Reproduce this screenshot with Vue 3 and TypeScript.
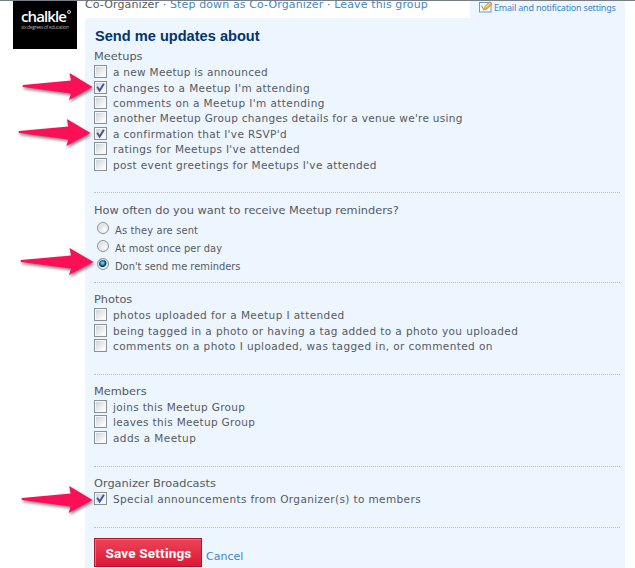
<script setup lang="ts">
interface Item { label: string; checked?: boolean; tracking?: number }
interface Group { title: string; kind: 'checkbox' | 'radio'; items: Item[] }

const groups: Group[] = [
  {
    title: 'Meetups',
    kind: 'checkbox',
    items: [
      { label: 'a new Meetup is announced', tracking: 0.29 },
      { label: "changes to a Meetup I'm attending", checked: true, tracking: 0.39 },
      { label: "comments on a Meetup I'm attending", tracking: 0.41 },
      { label: "another Meetup Group changes details for a venue we're using", tracking: 0.3 },
      { label: "a confirmation that I've RSVP'd", checked: true },
      { label: "ratings for Meetups I've attended" },
      { label: "post event greetings for Meetups I've attended" },
    ],
  },
  {
    title: 'How often do you want to receive Meetup reminders?',
    kind: 'radio',
    items: [
      { label: 'As they are sent', tracking: 0.15 },
      { label: 'At most once per day', tracking: 0.05 },
      { label: "Don't send me reminders", checked: true, tracking: 0 },
    ],
  },
  {
    title: 'Photos',
    kind: 'checkbox',
    items: [
      { label: 'photos uploaded for a Meetup I attended', tracking: 0.41 },
      { label: 'being tagged in a photo or having a tag added to a photo you uploaded', tracking: 0.4 },
      { label: 'comments on a photo I uploaded, was tagged in, or commented on', tracking: 0.41 },
    ],
  },
  {
    title: 'Members',
    kind: 'checkbox',
    items: [
      { label: 'joins this Meetup Group', tracking: 0.32 },
      { label: 'leaves this Meetup Group', tracking: 0.32 },
      { label: 'adds a Meetup', tracking: 0.42 },
    ],
  },
  {
    title: 'Organizer Broadcasts',
    kind: 'checkbox',
    items: [{ label: 'Special announcements from Organizer(s) to members', checked: true, tracking: 0.38 }],
  },
]

const arrows = [
  { x: 23, y: 73, width: 69.5 },
  { x: 19, y: 119, width: 71.5 },
  { x: 21, y: 248, width: 72.5 },
  { x: 22, y: 486, width: 70.5 },
]
</script>

<template>
  <div class="page">
    <aside class="side">
      <div class="logo">
        <div class="brand">chalkle<i class="ring"></i></div>
        <div class="tagline">six degrees of education</div>
      </div>
    </aside>
    <main class="main">
      <header class="top">
        <div class="role">Co-Organizer <b>·</b> <a>Step down as Co-Organizer</a> <b>·</b> <a>Leave this group</a></div>
        <div class="tab">
          <svg class="edit" width="14" height="12" viewBox="0 0 14 12">
            <rect x="0.5" y="1.5" width="11.5" height="9.5" fill="#f8fcff" stroke="#6f9cc5" />
            <path d="M2.5 4.5l2 4 2-1" fill="none" stroke="#7c91a6" />
            <path d="M4.6 9.2L5.6 5.6 10.4 1l2.6 2.2L8 8.2z" fill="#f0ae45" stroke="#c88836" stroke-width=".6" />
            <path d="M6.6 6.3l4.6-4.2" stroke="#ffe5a0" />
          </svg>
          <a>Email and notification settings</a>
        </div>
      </header>
      <form class="panel">
        <h2>Send me updates about</h2>
        <section v-for="g in groups" :key="g.title" class="group" :class="g.kind">
          <h3>{{ g.title }}</h3>
          <div v-for="i in g.items" :key="i.label" class="row">
            <span v-if="g.kind === 'checkbox'" class="box">
              <svg v-if="i.checked" width="13" height="13" viewBox="0 0 13 13">
                <path d="M3.2 5.8L5.6 9.6 9.9 2.8" fill="none" stroke="#3f559a" stroke-width="1.9" />
              </svg>
            </span>
            <span v-else class="dot" :class="{ on: i.checked }"></span>
            <span class="label" :style="{ letterSpacing: `${i.tracking ?? 0.35}px` }">{{ i.label }}</span>
          </div>
        </section>
        <div class="actions">
          <button type="button">Save Settings</button>
          <a>Cancel</a>
        </div>
      </form>
    </main>
    <svg class="arrows" width="100" height="568" viewBox="0 0 100 568">
      <g v-for="a in arrows" :key="a.y" :transform="`translate(${a.x} ${a.y}) scale(${a.width / 69.5} 1)`">
        <path d="M0 12L48 7.5 46.5 0 69.5 14 46 27 48 20.5 0 14Q-1 13 0 12Z" fill="#fb1058" />
      </g>
    </svg>
  </div>
</template>

<style>
body { margin: 0; background: #fff; overflow: hidden; }
</style>

<style scoped>
.page { position: relative; box-sizing: border-box; display: flex; width: 635px; height: 568px; overflow: hidden; border-top: 1px solid #797d86; font-family: "DejaVu Sans", Verdana, sans-serif; color: #555a60; }
.side { width: 85px; flex: none; }
.logo { box-sizing: border-box; width: 64px; height: 48px; margin-left: 13px; padding: 7px 0 0 8px; background: #000; color: #fff; font-family: "Open Sans", sans-serif; white-space: nowrap; }
.brand { display: flex; height: 17px; line-height: 17px; font-size: 15px; font-weight: 600; letter-spacing: -0.9px; }
.ring { box-sizing: border-box; width: 4px; height: 4px; margin: 2px 0 0 1px; border: 1px solid #ddd; border-radius: 50%; }
.tagline { height: 6px; line-height: 5px; font-size: 5px; letter-spacing: -0.38px; color: #aaa; }
.main { width: 540px; flex: none; }
.top { display: flex; justify-content: space-between; height: 17px; white-space: nowrap; }
.role { height: 17px; line-height: 8px; font-size: 11px; letter-spacing: 0.12px; }
a { color: #3f87c0; }
.role b { font-weight: 400; }
.tab { box-sizing: border-box; display: flex; width: 155px; padding-left: 9px; background: #edf5ff; font-family: "Noto Sans", sans-serif; font-size: 9px; line-height: 13px; letter-spacing: -0.2px; }
.tab a { margin-left: 1px; }
.edit { flex: none; }
.panel { box-sizing: border-box; height: 550px; padding: 8px 5px 0 9px; background: #edf5ff; border-top-left-radius: 4px; white-space: nowrap; }
h2 { margin: 0; height: 22px; padding-left: 1px; font: bold 14.6px/20px "Liberation Sans", sans-serif; color: #02356b; }
.group { box-sizing: border-box; border-top: 1px dotted #b5bfd3; padding: 8px 0 20.8px; }
.group:first-of-type { border-top: 0; padding: 0 0 20.2px; }
.group:last-of-type { padding-bottom: 20.6px; }
.group.radio { padding: 9px 0 7px; }
h3 { margin: 0; height: 16px; font-size: 11.35px; font-weight: 400; line-height: 16px; }
.row { display: flex; align-items: center; height: 15.4px; font-size: 10.5px; }
.box { box-sizing: border-box; width: 13px; height: 13px; flex: none; border: 1px solid #8b9097; background: linear-gradient(135deg, #c9ced4, #fbfbfc 80%); box-shadow: inset 0 0 0 1px #f5f7f9; }
.box svg { display: block; margin: -1px; }
.label { margin-left: 6px; padding-top: 1px; }
.radio h3 { margin-bottom: 3px; }
.radio .row { height: 18px; font-size: 9.9px; }
.dot { box-sizing: border-box; width: 12px; height: 12px; flex: none; margin: -4px 0 0 3px; border: 1px solid #8b9097; border-radius: 50%; background: radial-gradient(circle at 65% 65%, #fbfbfb, #c9cdd1); box-shadow: inset 0 0 0 1px #f4f5f6; }
.dot.on { background: radial-gradient(circle at 45% 40%, #62c4ec 0 1px, #176a9a 2.5px, #0b2f4c 3.6px, #e4e8eb 4.4px); }
.actions { display: flex; border-top: 1px dotted #b5bfd3; padding-top: 10px; }
button { box-sizing: border-box; width: 108px; height: 29px; padding: 1px 0 0 1px; border: 1px solid #b0142f; background: linear-gradient(#ec4358, #dc1936); box-shadow: inset 1px 1px 0 #f06a7b; color: #fff; font: bold 13.5px Roboto, sans-serif; letter-spacing: 0.2px; }
.actions a { margin: 11px 0 0 4px; font-size: 11px; line-height: 16px; }
.arrows { position: absolute; left: 0; top: -1px; filter: drop-shadow(1px 2px 1.5px rgba(60, 40, 50, 0.6)); }
</style>
